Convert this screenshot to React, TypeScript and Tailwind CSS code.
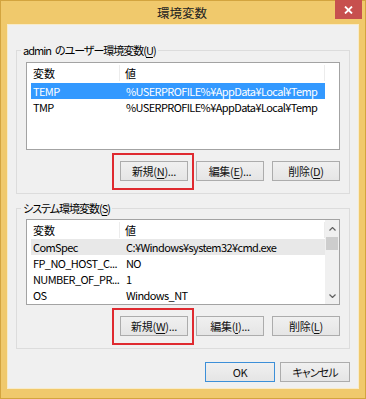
import type { ReactNode } from "react";

const font = "font-['Noto_Sans_CJK_JP','Noto_Sans',sans-serif] [font-feature-settings:'palt']";

function Btn({ children, w = "w-[68px]", primary = false, marked = false, tight = false }: { children: ReactNode; w?: string; primary?: boolean; marked?: boolean; tight?: boolean }) {
  return (
    <div className={`relative ${w} h-[20px]`}>
      <button
        className={`w-full h-full flex items-center justify-center border ${
          primary ? "border-[#3c8fd8]" : "border-[#acacac]"
        } bg-gradient-to-b from-[#f0f0f0] to-[#e5e5e5] text-[11px] leading-[16px] ${tight ? "tracking-[-0.9px]" : "tracking-[-0.3px]"} text-[#111]`}
      >
        {children}
      </button>
      {marked && <div className="absolute -left-[8px] -right-[6px] -top-[8px] -bottom-[9px] border-2 border-[#df2a30]" />}
    </div>
  );
}

function Key({ k }: { k: string }) {
  return <span className="underline underline-offset-2">{k}</span>;
}

function Header() {
  return (
    <div className="w-[298px] flex h-full items-center">
      <div className="w-[93px] shrink-0 pl-[6px] border-r border-[#ececec]">変数</div>
      <div className="flex-1 pl-[5px] border-r border-[#ececec]">値</div>
    </div>
  );
}

function Row({ name, value, state }: { name: string; value: string; state?: "sel" | "hot" }) {
  const bg = state === "sel" ? "bg-[#3399ff] text-white" : state === "hot" ? "bg-[#e8e8e8]" : "";
  return (
    <div className={`ml-[4px] w-[294px] h-[16px] flex items-center tracking-[-0.6px] ${bg}`}>
      <div className="w-[93px] shrink-0 pl-[2px] whitespace-nowrap overflow-hidden">{name}</div>
      <div className="pl-[2px] whitespace-nowrap">{value}</div>
    </div>
  );
}

function Group({ label, children, mt, listGap }: { label: ReactNode; children: ReactNode; mt: string; listGap: string }) {
  return (
    <div className={`${mt} border border-[#dcdcdc] pb-[12px]`}>
      <div className="-mt-[9px] ml-[4px] w-fit px-[2px] bg-[#f0f0f0] h-[16px] leading-[16px] tracking-[-1px]">{label}</div>
      <div className={`${listGap} px-[9px]`}>{children}</div>
    </div>
  );
}

export default function App() {
  return (
    <div className={`w-[366px] h-[399px] bg-[#f0c96c] border border-[#d3a43f] flex flex-col text-[11px] leading-[16px] text-black ${font}`}>
      {/* title bar */}
      <div className="h-[23px] relative flex items-center justify-center">
        <span className="text-[12.5px] text-[#222] -ml-[2px] mt-[1px]">環境変数</span>
        <div className="absolute right-[3px] -top-[1px] w-[27px] h-[19px] bg-[#c7504e] flex items-center justify-center">
          <svg width="9" height="8" viewBox="0 0 9 8">
            <path d="M1 0.5 L8 7.5 M8 0.5 L1 7.5" stroke="white" strokeWidth="1.8" />
          </svg>
        </div>
      </div>

      {/* client */}
      <div className="mx-[6px] mb-[9px] flex-1 border border-[#f8ebc9] bg-[#f0f0f0] px-[8px]">
        <Group
          mt="mt-[25px]"
          listGap="mt-[4px]"
          label={
            <>
              admin<span className="ml-[4px]">のユーザー環境変数(</span>
              <Key k="U" />)
            </>
          }
        >
          <div className="h-[88px] border border-[#a3a3a3] bg-white overflow-hidden">
            <div className="h-[20px] flex">
              <Header />
            </div>
            <Row name="TEMP" value="%USERPROFILE%¥AppData¥Local¥Temp" state="sel" />
            <Row name="TMP" value="%USERPROFILE%¥AppData¥Local¥Temp" />
          </div>
          <div className="mt-[11px] flex justify-end gap-[8px]">
            <Btn marked>
              新規(<Key k="N" />)...
            </Btn>
            <Btn>
              編集(<Key k="E" />)...
            </Btn>
            <Btn>
              削除(<Key k="D" />)
            </Btn>
          </div>
        </Group>

        <Group
          mt="mt-[14px]"
          listGap="mt-[3px]"
          label={
            <>
              システム環境変数(<Key k="S" />)
            </>
          }
        >
          <div className="h-[86px] border border-[#a3a3a3] bg-white overflow-hidden flex">
            <div className="w-[298px]">
              <div className="h-[19px] flex">
                <Header />
              </div>
              <Row name="ComSpec" value="C:¥Windows¥system32¥cmd.exe" state="hot" />
              <Row name="FP_NO_HOST_C..." value="NO" />
              <Row name="NUMBER_OF_PR..." value="1" />
              <Row name="OS" value="Windows_NT" />
            </div>
            {/* scrollbar */}
            <div className="flex-1 bg-[#f0f0f0] flex flex-col items-center">
              <div className="h-[17px] flex items-center justify-center">
                <svg width="7" height="4" viewBox="0 0 7 4">
                  <path d="M0.5 3.5 L3.5 0.5 L6.5 3.5" fill="none" stroke="#606060" strokeWidth="1.2" />
                </svg>
              </div>
              <div className="w-[12px] h-[13px] bg-[#cdcdcd]" />
              <div className="flex-1" />
              <div className="h-[17px] flex items-center justify-center">
                <svg width="7" height="4" viewBox="0 0 7 4">
                  <path d="M0.5 0.5 L3.5 3.5 L6.5 0.5" fill="none" stroke="#606060" strokeWidth="1.2" />
                </svg>
              </div>
            </div>
          </div>
          <div className="mt-[11px] flex justify-end gap-[8px]">
            <Btn marked>
              新規(<Key k="W" />)...
            </Btn>
            <Btn>
              編集(<Key k="I" />)...
            </Btn>
            <Btn>
              削除(<Key k="L" />)
            </Btn>
          </div>
        </Group>

        <div className="mt-[13px] flex justify-end gap-[5px]">
          <Btn w="w-[70px]" primary>
            OK
          </Btn>
          <Btn w="w-[70px]" tight>
            キャンセル
          </Btn>
        </div>
      </div>
    </div>
  );
}
